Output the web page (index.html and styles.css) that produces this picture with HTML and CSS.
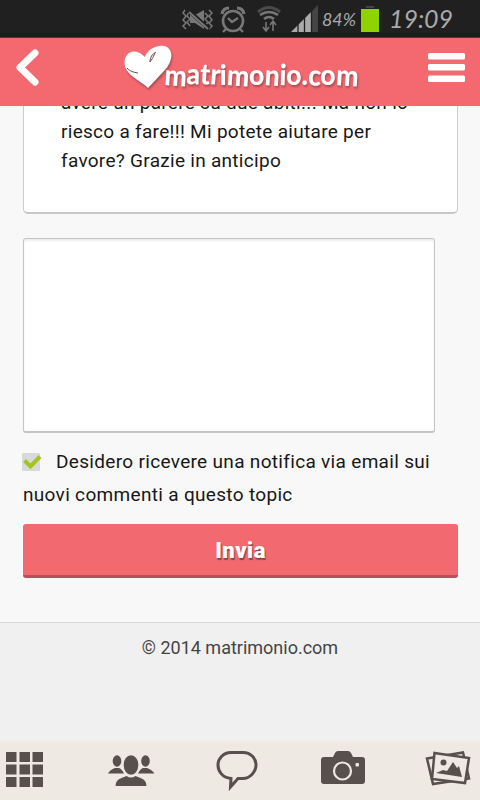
FILE: index.html
```html
<!DOCTYPE html>
<html lang="it">
<head>
<meta charset="utf-8">
<title>matrimonio.com</title>
<link rel="stylesheet" href="styles.css">
</head>
<body>
<div class="screen">
  <div class="status">
    <svg class="status-icons" width="300" height="38" viewBox="180 0 300 38">
      <g fill="none" stroke="#777" stroke-width="2">
        <path d="M185 10l-2 3 3 3-3 4 3 3-3 3 3 3M189 12l-2 4 3 3-3 3 3 4M209 10l3 3-3 3 3 4-3 3 3 3-3 3M205 13l3 3-3 3 3 3-3 4" stroke-width="1.500"/>
        <circle cx="233" cy="21" r="10" stroke-width="2.6"/>
        <path d="M228 18l4 4 6-4M226 29l-3 3M240 29l3 3" stroke-width="2.3"/>
        <path d="M222 14q1-6 7-6M237 8q6 0 7 6" stroke-width="3"/>
        <path d="M258 12q11-9 22 0" stroke="#4b4b4b" stroke-width="3"/>
        <path d="M260 15q9-6 18 0M264 19q5-4 10 0" stroke-width="2.6"/>
        <path d="M266 22v9M263 27l3 4 3-4M273 31v-10M270 25l3-4 3 4" stroke-width="1.600"/>
      </g>
      <path d="M190 15h5l9-5v19l-9-6h-5z" fill="#777"/>
      <path d="M189 11l20 18" stroke="#202020" stroke-width="4"/>
      <path d="M189 12l19 17" stroke="#777" stroke-width="2"/>
      <path d="M291 32l20-20v20z" fill="#aaa"/><path d="M312 32V11l6-6v27z" fill="#444"/>
      <path d="M298 24v8M304.500 17v15M311.500 10v22" stroke="#202020" stroke-width="1.300"/>
      <text class="battery-text" x="322" y="26" textLength="34" lengthAdjust="spacingAndGlyphs">84%</text>
      <path d="M366 8V6h8v2z" fill="#444"/><path d="M361 9h18v23h-18z" fill="#8fd400"/>
      <text class="time" x="389" y="27.500" textLength="64" lengthAdjust="spacing">19:09</text>
    </svg>
  </div>
  <header class="header">
    <svg width="480" height="68" viewBox="0 38 480 68">
      <path d="M35 53L20 67.500L35 82" fill="none" stroke="#fff" stroke-width="7" stroke-linecap="round" stroke-linejoin="round"/>
      <g class="logo">
        <path d="M148 88C140 80 124 75 124.500 62C125 52 135 47 145 57C147 49 159 43 167 47C175 52 171 64 164 71C158 77 153 83 148 88Z" fill="#fff"/>
        <path d="M127 68Q130 72 138 73M150 62Q150 55 156 52M150 62Q153 58 155 53" fill="none" stroke="#754c50" stroke-width="1"/>
        <text class="logo-text" x="164" y="85" dy="0 -1 0 0 1 0 0 0 0 0 0 0 0 0" rotate="4 2 3 5 0 4 0 4 2 0 0 4 0 4" textLength="194" lengthAdjust="spacingAndGlyphs">matrimonio.com</text>
      </g>
      <g fill="#fff"><rect x="428" y="53" width="37" height="6.500" rx="1.500"/><rect x="428" y="64" width="37" height="6.500" rx="1.500"/><rect x="428" y="75.500" width="37" height="6.500" rx="1.500"/></g>
    </svg>
  </header>
  <main class="content">
    <div class="clip">
      <div class="post"><p>avere un parere su due abiti... Ma non lo<br>riesco a fare!!! Mi potete aiutare per<br>favore? Grazie in anticipo</p></div>
    </div>
    <div class="reply"></div>
    <div class="notify">
      <svg class="check" width="20" height="20" viewBox="0 0 20 20"><rect x="0" y="1" width="18" height="18" rx="1" fill="#d9d9d9"/><path d="M2.500 8.500l6 6L18 4.500" fill="none" stroke="#a4c520" stroke-width="4"/></svg>
      <span class="notify-first">Desidero ricevere una notifica via email sui</span><br><span class="notify-second">nuovi commenti a questo topic</span>
    </div>
    <div class="submit">Invia</div>
  </main>
  <footer class="footer">© 2014 matrimonio.com</footer>
  <nav class="tabs">
    <svg width="480" height="60" viewBox="0 740 480 60">
      <g fill="#57504c">
        <path d="M6 752h10.500v10H6zM19.500 752h10.500v10H19.500zM32.500 752H43v10H32.500zM6 764.500h10.500v10H6zM19.500 764.500h10.500v10H19.500zM32.500 764.500H43v10H32.500zM6 777h10.500v10H6zM19.500 777h10.500v10H19.500zM32.500 777H43v10H32.500z"/>
        <ellipse cx="117" cy="761" rx="4.300" ry="5.700"/><ellipse cx="145.500" cy="761" rx="4.300" ry="5.700"/>
        <path d="M108 773.500q2-4 7-5.500h4q3 1 5 5.500zM138 773.500q2-4.500 5-5.500h4q5 1.500 7.500 5.500z"/>
        <ellipse cx="131" cy="765" rx="7.300" ry="9.800"/>
        <path d="M115.500 786q0-6 6-8l5-2q4.500 3 9 0l5 2q6 2 6 8z"/>
        <path d="M324 757h9l2-4q1-2 3-2h10q2 0 3 2l2 4h9q3 0 3 3v21q0 3-3 3h-38q-3 0-3-3v-21q0-3 3-3z"/>
      </g>
      <path d="M231 752.500h12c8 0 13 6 13 12.500s-6 13.500-13 13.500h-5L230.500 787l.5-8.500C222 777.500 218 771 218 765s5-12.500 13-12.500z" fill="none" stroke="#57504c" stroke-width="3"/>
      <circle cx="342.500" cy="771" r="8.500" fill="none" stroke="#eee9e3" stroke-width="2.200"/><rect x="355.500" y="763" width="3.500" height="3.500" rx="1" fill="#eee9e3"/>
      <g fill="none" stroke="#57504c" stroke-width="2.500">
        <path d="M427 758.500l36-6 6 26-36 5.500z"/>
        <path d="M434.500 753l34.500 5-4 25-33-4z" fill="#eee9e3"/>
      </g>
      <g fill="#57504c"><circle cx="443.500" cy="762.500" r="3"/><path d="M436 773l7-3 4 1 6-9 4 6 2-2 3 11z"/></g>
    </svg>
  </nav>
</div>
</body>
</html>
```
FILE: styles.css
```css
body { margin: 0; font-family: Roboto, sans-serif; color: #171717; }
.screen { width: 480px; height: 800px; overflow: hidden; background: #f8f8f8; display: flex; flex-direction: column; }
svg { display: block; }
.status { height: 38px; flex: none; box-sizing: border-box; background: linear-gradient(#202020 32px, #171f20 33px, #261718 37px, #985055 38px); display: flex; justify-content: flex-end; }
.battery-text { font: italic 400 18px Lato, sans-serif; fill: #aaa; }
.time { font: italic 400 25px Lato, sans-serif; fill: #aaa; }
.header { height: 68px; flex: none; background: #f3696f; }
.logo { filter: drop-shadow(1px 2px 1px #a74c51); }
.logo-text { font: 900 29px Lato, sans-serif; fill: #fff; }
.content { height: 516px; flex: none; box-sizing: border-box; padding: 0 22px 0 23px; }
.clip { height: 108px; overflow: hidden; display: flex; align-items: flex-end; }
.post { flex: 1; height: 150px; box-sizing: border-box; border: 1px solid #ccc; border-bottom: 2px solid #c8c8c8; border-radius: 5px; background: #fff; padding: 0 37px 37px; display: flex; align-items: flex-end; }
.post p { margin: 0; font-size: 19px; line-height: 29px; letter-spacing: .29px; white-space: nowrap; }
.reply { margin-top: 24px; width: 412px; height: 195px; box-sizing: border-box; border: 1px solid #c4c4c4; border-bottom-width: 2px; border-radius: 3px; background: #fff; box-shadow: inset 0 2px 2px #eee; }
.notify { height: 91px; box-sizing: border-box; padding-top: 12px; font-size: 19px; line-height: 33px; letter-spacing: .32px; white-space: nowrap; }
.check { display: inline-block; vertical-align: -4px; margin: 0 9px 0 -1px; }
.submit { height: 54px; box-sizing: border-box; border-bottom: 3px solid #b5515d; border-radius: 3px; background: #f2696f; color: #fff; font-size: 22px; letter-spacing: .5px; font-weight: 900; line-height: 53px; text-align: center; text-shadow: 1px 2px 1px #8e4349; }
.footer { height: 118px; flex: none; box-sizing: border-box; border-top: 1px solid #d5d5d5; background: #f0f0f0; color: #444; padding-top: 14px; font-size: 18px; line-height: 22px; text-align: center; }
.tabs { height: 60px; flex: none; background: linear-gradient(#f6eee8, #eee9e3 4px); }
```
